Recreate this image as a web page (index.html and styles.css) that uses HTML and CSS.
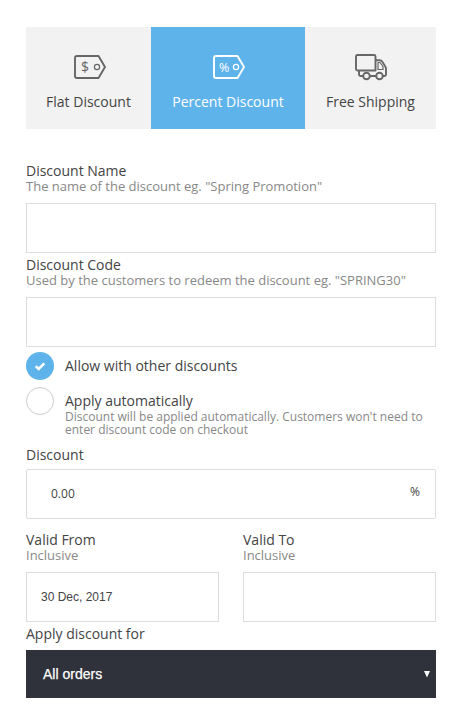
FILE: index.html
```html
<!DOCTYPE html>
<html lang="en">
<head>
<meta charset="utf-8">
<title>Discount</title>
<link rel="stylesheet" href="styles.css">
</head>
<body>
<main class="form">
  <nav class="tabs">
    <div class="tab tab-flat">
      <svg class="icon tag" width="34" height="28" viewBox="0 0 34 28"><path class="line" d="M4 3H25.500L32 14L25.500 25H4Q2 25 2 23V5Q2 3 4 3Z"/><circle class="thin" cx="24" cy="14" r="2.600"/><text class="mark" x="8" y="19">$</text></svg>
      <span>Flat Discount</span>
    </div>
    <div class="tab tab-percent active">
      <svg class="icon tag" width="34" height="28" viewBox="0 0 34 28"><path class="line" d="M4 3H25.500L32 14L25.500 25H4Q2 25 2 23V5Q2 3 4 3Z"/><circle class="thin" cx="24" cy="14" r="2.600"/><text class="mark percent" x="7" y="18.500">%</text></svg>
      <span>Percent Discount</span>
    </div>
    <div class="tab tab-shipping">
      <svg class="icon" width="34" height="28" viewBox="0 0 34 28"><path class="line" d="M3.500 2H20Q21.500 2 21.500 3.500V17.500H3.500Q2 17.500 2 16V3.500Q2 2 3.500 2M21.500 7.300H25.500Q27.500 7.300 28.500 9L31 13Q32 14.500 32 16V21.500Q32 23 30.500 23H29M22 23H16M9 23H6.500Q5 23 5 21.500V18"/><path class="thin" d="M24 16.500V9.500H26L29 13.500V16.500Z"/><circle class="line" cx="12.500" cy="23" r="3.300"/><circle class="line" cx="25.500" cy="23" r="3.300"/></svg>
      <span>Free Shipping</span>
    </div>
  </nav>

  <div class="field">
    <label for="name">Discount Name</label>
    <p class="hint">The name of the discount eg. "Spring Promotion"</p>
    <input class="box" id="name" type="text">
  </div>
  <div class="field">
    <label for="code">Discount Code</label>
    <p class="hint">Used by the customers to redeem the discount eg. "SPRING30"</p>
    <input class="box" id="code" type="text">
  </div>

  <div class="option">
    <span class="check checked"><svg width="28" height="28" viewBox="0 0 28 28"><path d="M9.800 14.200L12.700 17L18.300 11.300"/></svg></span>
    <span class="option-text">Allow with other discounts</span>
  </div>
  <div class="option auto">
    <span class="check"></span>
    <div class="option-text">Apply automatically
      <p class="note">Discount will be applied automatically. Customers won't need to<br>enter discount code on checkout</p>
    </div>
  </div>

  <div class="field amount">
    <label for="amount">Discount</label>
    <div class="box value"><input id="amount" type="text" value="0.00"><span>%</span></div>
  </div>

  <div class="dates">
    <div class="field">
      <label for="from">Valid From</label>
      <p class="hint">Inclusive</p>
      <input class="box date" id="from" type="text" value="30 Dec, 2017">
    </div>
    <div class="field">
      <label for="to">Valid To</label>
      <p class="hint">Inclusive</p>
      <input class="box date" id="to" type="text">
    </div>
  </div>

  <div class="apply">Apply discount for</div>
  <div class="select"><span>All orders</span><svg width="6" height="7" viewBox="0 0 6 7"><path d="M0 0H6L3 6.500Z"/></svg></div>
</main>
</body>
</html>
```

FILE: styles.css
```css
* { box-sizing: border-box; }
body {
  margin: 0;
  background: #fff;
  color: #444;
  font: 14px/16px "Open Sans", sans-serif;
}
p { margin: 0; }
.form { width: 410px; margin: 27px 0 0 26px; }
.tabs { display: grid; grid-template-columns: 125px 154px 131px; height: 102px; margin-bottom: 34px; }
.tab {
  display: flex;
  flex-direction: column;
  align-items: center;
  padding-top: 26px;
  background: #f2f2f2;
}
.tab span { margin-top: 13px; }
.icon { display: block; color: #666; }
.tag { margin-left: 2px; }
.active { background: #5fb3eb; color: #fff; }
.active .icon { color: #fff; }
.line, .thin { fill: none; stroke: currentColor; stroke-width: 1.9; stroke-linejoin: round; }
.thin { stroke-width: 1.2; }
.mark { fill: currentColor; font: 14px "Open Sans", sans-serif; }
.percent { font-size: 12.5px; }
.field { display: flex; flex-direction: column; margin-bottom: 4px; }
.field label { height: 16px; }
.hint { height: 24px; font-size: 13px; line-height: 15px; color: #888; }
.box {
  width: 100%;
  height: 50px;
  border: 1px solid #ddd;
  border-radius: 0;
  background: #fff;
  outline: 0;
}
.option { display: flex; gap: 11px; height: 35px; margin-top: 5px; }
.option-text { padding-top: 6px; }
.check { flex: none; width: 28px; height: 28px; border: 1px solid #ccc; border-radius: 50%; }
.checked { border: 0; background: #5fb3eb; }
.check svg { display: block; fill: none; stroke: #fff; stroke-width: 2.6; }
.auto { height: 60px; margin-top: 0; }
.note { margin-top: 1px; font-size: 12px; line-height: 13px; color: #888; }
.amount label { height: 22px; }
.value {
  display: flex;
  align-items: center;
  justify-content: space-between;
  padding: 0 15px 0 24px;
  border-radius: 2px;
  font-size: 12px;
}
.value input { width: 200px; margin-top: -2px; padding: 0; border: 0; outline: 0; color: #444; font: 12px "Open Sans", sans-serif; }
.value span { margin-top: -4px; }
.dates { display: grid; grid-template-columns: 193px 193px; gap: 24px; margin-top: 13px; }
.date { padding: 0 14px; color: #444; font: 12px "Liberation Sans", sans-serif; }
.apply { height: 24px; }
.select {
  display: flex;
  align-items: center;
  justify-content: space-between;
  height: 48px;
  padding: 0 6px 0 17px;
  background: #2f323a;
  color: #fff;
  font: 14px "Liberation Sans", sans-serif;
  -webkit-text-stroke: 0.25px #fff;
}
.select path { fill: #fff; }
```
